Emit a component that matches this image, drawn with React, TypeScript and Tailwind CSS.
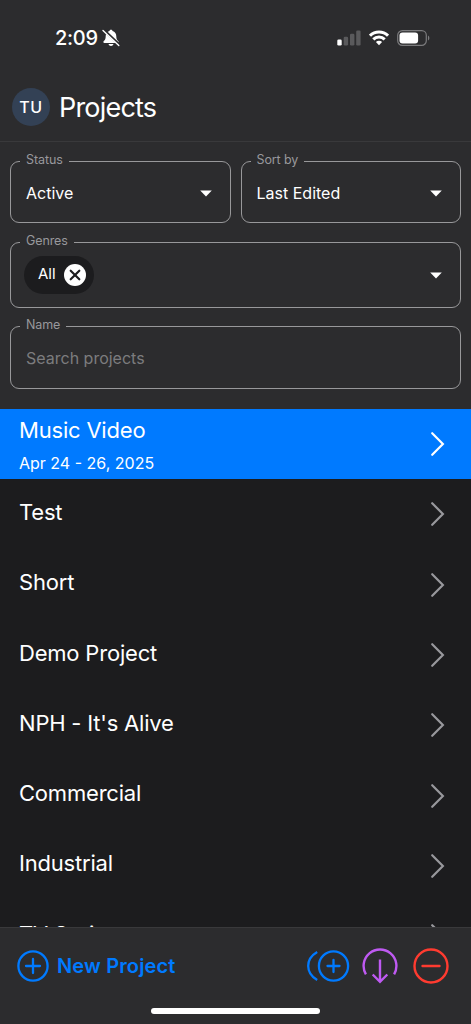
import React, { useState } from 'react';

const projects = [
  { id: 1, name: "Music Video", dates: "Apr 24 - 26, 2025" },
  { id: 2, name: "Test" },
  { id: 3, name: "Short" },
  { id: 4, name: "Demo Project" },
  { id: 5, name: "NPH - It's Alive" },
  { id: 6, name: "Commercial" },
  { id: 7, name: "Industrial" },
  { id: 8, name: "TV Series" }
];

const StatusBar = () => (
  <div className="h-[76px] flex items-center justify-between pl-[55px] pr-[41px]">
    <div className="flex items-center">
      <span className="text-[20px] leading-6 font-medium tracking-[-0.3px]">2:09</span>
      <svg className="ml-[4px]" width="18" height="18" viewBox="0 0 18 18" fill="none">
        <path d="M9 .8c-.9 0-1.4.5-1.5 1.2C5 2.7 3.700 4.800 3.700 7.200c0 2.500-.7 3.700-1.900 4.800-.9.900-.4 1.900.6 1.900h13.200c1 0 1.500-1 .6-1.900-1.200-1.100-1.900-2.300-1.900-4.800 0-2.400-1.300-4.500-3.800-5.200C10.400 1.300 9.900.8 9 .8z" fill="#fff" />
        <path d="M6.500 15h5c-.3 1.200-1.300 2-2.500 2s-2.200-.8-2.500-2z" fill="#fff" />
        <path d="M1.800 1l15.600 14.800" stroke="#2c2c2e" strokeWidth="2.600" />
        <path d="M1 1.600l15.800 14.800" stroke="#fff" strokeWidth="1.400" strokeLinecap="round" />
      </svg>
    </div>
    <div className="flex items-center">
      <svg width="24" height="16" viewBox="0 0 24 16">
        <rect x="0.300" y="9.500" width="4.400" height="6" rx="1.300" fill="#fff" />
        <rect x="6.700" y="6.800" width="4.400" height="8.700" rx="1.300" fill="#5a5a5c" />
        <rect x="13" y="3.800" width="4.400" height="11.700" rx="1.300" fill="#5a5a5c" />
        <rect x="19.200" y="0.500" width="4.400" height="15" rx="1.300" fill="#5a5a5c" />
      </svg>
      <svg className="ml-[8px]" width="20" height="16" viewBox="0 0 20 16" fill="none" stroke="#fff" strokeWidth="3">
        <path d="M1 5.700a12.800 12.800 0 0 1 18 0" />
        <path d="M4.300 9.400a8.100 8.100 0 0 1 11.400 0" />
        <path d="M6.900 12.100a4.400 4.400 0 0 1 6.200 0L10 15.300z" fill="#fff" stroke="none" />
      </svg>
      <svg className="ml-[8px]" width="33" height="16" viewBox="0 0 33 16">
        <rect x="0.700" y="0.700" width="28.600" height="14.600" rx="4.600" fill="none" stroke="#7b7b7d" strokeWidth="1.200" />
        <rect x="2.500" y="2.500" width="18.600" height="11" rx="3" fill="#fff" />
        <path d="M31 5.500c1.800.8 1.800 4.200 0 5z" fill="#7b7b7d" />
      </svg>
    </div>
  </div>
);

const Caret = () => (
  <svg width="12" height="7" viewBox="0 0 12 7">
    <path d="M.2.500h11.600L6 6.500z" fill="#fff" />
  </svg>
);

type FieldProps = { label: string; className: string; children: React.ReactNode };

const Field = ({ label, className, children }: FieldProps) => (
  <fieldset className={`min-w-0 border border-[#98989a] rounded-[9px] pl-[9px] pr-[18px] ${className}`}>
    <legend className="px-[6px] pb-[2px] text-[12.5px] leading-[14px] tracking-[-0.1px] text-[#98989c]">{label}</legend>
    {children}
  </fieldset>
);

const Chevron = ({ active }: { active: boolean }) => (
  <svg width="15" height="26" viewBox="0 0 15 26" fill="none" stroke={active ? "#fff" : "#98989d"} strokeWidth="2.200" strokeLinecap="round" strokeLinejoin="miter">
    <path d="M2.200 2.200L12.900 13 2.200 23.800" />
  </svg>
);

export default function App() {
  const [selected, setSelected] = useState(1);
  const [search, setSearch] = useState('');

  return (
    <div className="h-[1024px] w-full flex flex-col overflow-hidden bg-[#1c1c1e] text-white font-['Inter',sans-serif]">
      <div className="shrink-0 h-[409px] bg-[#2c2c2e]">
        <StatusBar />

        {/* Header */}
        <div className="h-[66px] pl-[12px] pb-[4px] flex items-center border-b border-[#39393b]">
          <div className="w-[38px] h-[38px] rounded-full bg-[#334155] flex items-center justify-center text-[16px] font-medium tracking-[0.5px] pt-px">TU</div>
          <h1 className="ml-[9px] pt-[2px] text-[27px] leading-8 tracking-[-0.8px]">Projects</h1>
        </div>

        {/* Filters */}
        <div className="px-[10px] pt-[11px]">
          <div className="flex gap-[10px]">
            <Field label="Status" className="flex-1 h-[70px]">
              <div className="h-[48px] pl-[6px] flex items-center justify-between text-[16px]">
                Active
                <Caret />
              </div>
            </Field>
            <Field label="Sort by" className="flex-1 h-[70px]">
              <div className="h-[48px] pl-[6px] flex items-center justify-between text-[16px]">
                Last Edited
                <Caret />
              </div>
            </Field>
          </div>
          <Field label="Genres" className="mt-[11px] h-[74px]">
            <div className="h-[50px] pl-[4px] flex items-center justify-between">
              <div className="h-[38px] w-[70px] rounded-full bg-[#1c1c1e] flex items-center justify-between pl-[14px] pr-[8px]">
                <span className="text-[15px] -mt-px">All</span>
                <svg width="22" height="22" viewBox="0 0 22 22">
                  <circle cx="11" cy="11" r="11" fill="#fff" />
                  <path d="M6.700 6.700l8.600 8.600M15.300 6.700l-8.600 8.600" stroke="#1c1c1e" strokeWidth="2.200" strokeLinecap="round" />
                </svg>
              </div>
              <Caret />
            </div>
          </Field>
          <Field label="Name" className="mt-[10px] h-[71px]">
            <input
              value={search}
              onChange={(e) => setSearch(e.target.value)}
              placeholder="Search projects"
              className="block w-full h-[48px] pl-[6px] bg-transparent outline-none text-[16px] placeholder:text-[#7c7c7e]"
            />
          </Field>
        </div>
      </div>

      {/* Project list */}
      <div className="flex-1 min-h-0 overflow-hidden">
        {projects.map((project) => {
          const active = project.id === selected;
          return (
            <div
              key={project.id}
              onClick={() => setSelected(project.id)}
              className={`h-[70.3px] pl-[19px] pr-[26px] flex items-center justify-between ${active ? "bg-[#007aff]" : ""}`}
            >
              <div className={project.dates ? "pb-px" : "pb-[5px]"}>
                <p className="text-[22px] leading-[30px] tracking-[-0.2px]">{project.name}</p>
                {project.dates && <p className="mt-[8px] text-[16px] leading-5">{project.dates}</p>}
              </div>
              <Chevron active={active} />
            </div>
          );
        })}
      </div>

      {/* Bottom toolbar */}
      <div className="shrink-0 h-[97px] bg-[#2c2c2e] border-t border-[#39393b] flex flex-col">
        <div className="h-[76px] pl-[17px] pr-[22px] flex items-center justify-between">
          <button className="flex items-center text-[#007aff]">
            <svg width="32" height="32" viewBox="0 0 32 32" fill="none" stroke="#007aff" strokeWidth="2.300" strokeLinecap="round">
              <circle cx="16" cy="16" r="14.600" />
              <path d="M16 9v14M9 16h14" />
            </svg>
            <span className="ml-[8px] text-[20px] leading-6 font-semibold tracking-[0.15px]">New Project</span>
          </button>
          <div className="flex items-center">
            <svg width="43" height="32" viewBox="0 0 43 32" fill="none" stroke="#007aff" strokeWidth="2.300">
              <circle cx="26.500" cy="16" r="14.600" />
              <path d="M26.500 10v12M20.500 16h12" strokeLinecap="round" />
              <path d="M10.200 2C-1.800 9-1.800 23 10.200 30" />
            </svg>
            <svg className="ml-[12px]" width="36" height="36" viewBox="0 0 36 36" fill="none" stroke="#bf5af2" strokeWidth="2.400">
              <path d="M3.900 26.300A16.400 16.400 0 1 1 32.100 26.300" />
              <path d="M18 11.500v22M10.700 26.500l7.300 7.300 7.300-7.300" />
            </svg>
            <svg className="ml-[15px]" width="36" height="36" viewBox="0 0 36 36" fill="none" stroke="#ff3b30" strokeWidth="2.400">
              <circle cx="18" cy="18" r="16.500" />
              <path d="M9.500 18h17" strokeLinecap="round" />
            </svg>
          </div>
        </div>
        <div className="mt-[4px] mx-auto w-[169px] h-[6px] rounded-full bg-white" />
      </div>
    </div>
  );
}
